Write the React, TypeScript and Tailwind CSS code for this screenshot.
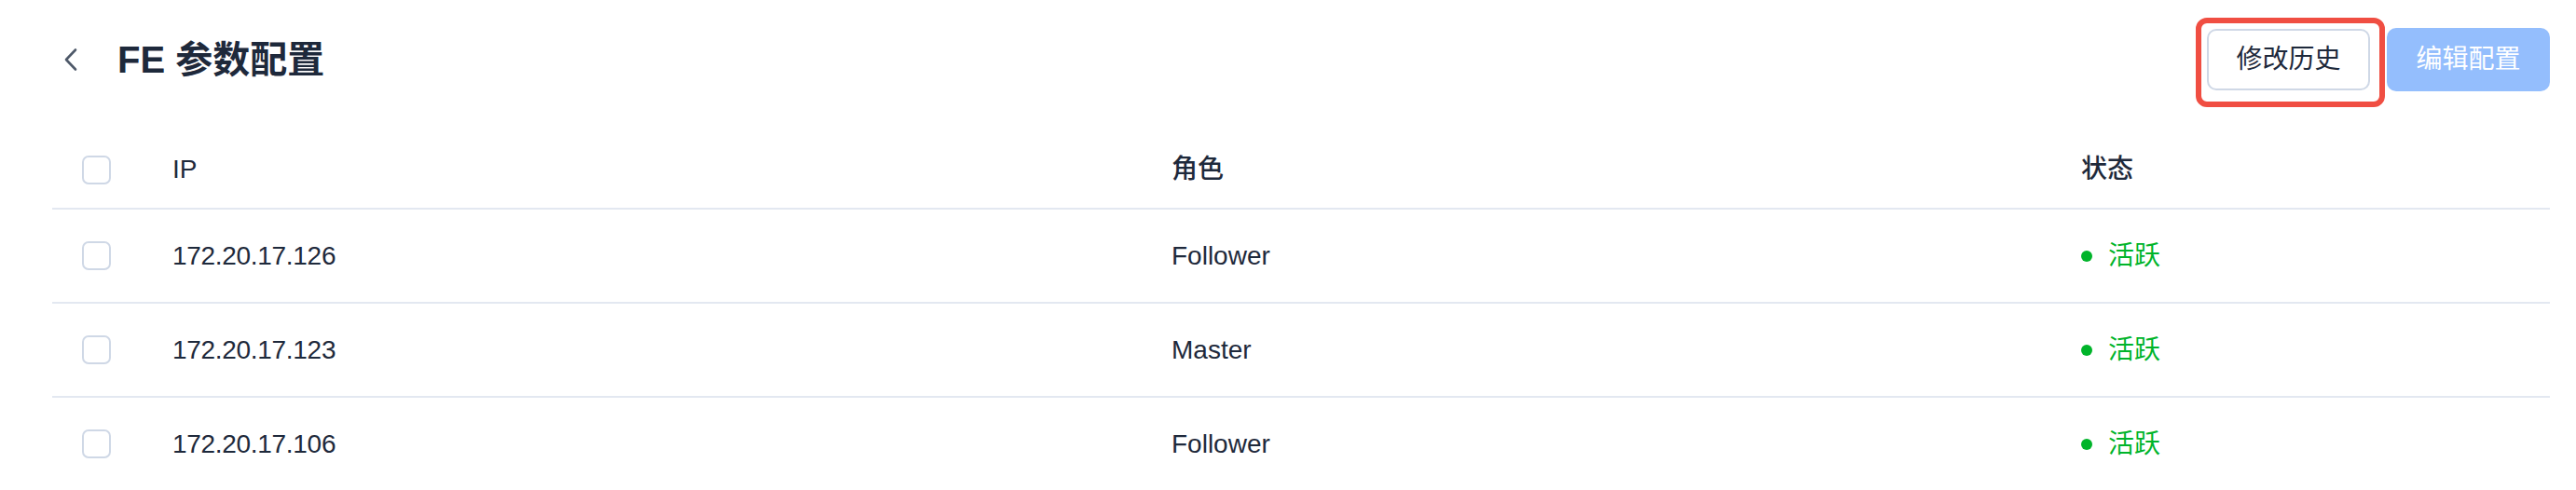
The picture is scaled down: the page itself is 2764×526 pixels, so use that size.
import React from "react";

const rows = [
  { ip: "172.20.17.126", role: "Follower" },
  { ip: "172.20.17.123", role: "Master" },
  { ip: "172.20.17.106", role: "Follower" },
];

function Checkbox() {
  return <div className="w-[31px] h-[31px] rounded-[7px] border-2 border-[#cfd8e6] bg-white" />;
}

export default function App() {
  return (
    <div
      className="w-[2764px] h-[526px] overflow-hidden bg-white pl-[56px] pr-[28px] text-[#1e293b]"
      style={{ fontFamily: '"Liberation Sans", "Noto Sans CJK SC", sans-serif' }}
    >
      <div className="h-[128px] flex items-center justify-between">
        <div className="flex items-center">
          <div className="w-[70px] flex items-center">
            <svg className="ml-[12px]" width="16" height="26" viewBox="0 0 16 26" fill="none">
              <path d="M13 2.5 L3 13 L13 23.5" stroke="#4e5969" strokeWidth="2.6" strokeLinecap="round" strokeLinejoin="round" />
            </svg>
          </div>
          <h1 className="text-[40px] font-semibold leading-none text-[#1e293b]">FE 参数配置</h1>
        </div>
        <div className="flex items-center gap-[18px]">
          <div className="relative">
            <button className="w-[175px] h-[66px] rounded-[10px] border-2 border-[#cfd8e6] bg-white text-[28px] text-[#1e293b] flex items-center justify-center">
              修改历史
            </button>
            <div className="absolute left-[-12px] top-[-12px] right-[-16px] bottom-[-18px] border-[6px] border-[#f04e42] rounded-[12px] pointer-events-none" />
          </div>
          <button className="w-[175px] h-[68px] rounded-[10px] bg-[#94befd] text-[28px] text-white flex items-center justify-center">
            编辑配置
          </button>
        </div>
      </div>

      <div className="mt-[12px]">
        <div className="grid grid-cols-[129px_1072px_976px_1fr] items-center h-[85px] border-b-2 border-[#e3e8f1] text-[28px] font-medium">
          <div className="pl-[32px] flex items-center pt-[2px]">
            <Checkbox />
          </div>
          <div>IP</div>
          <div>角色</div>
          <div>状态</div>
        </div>
        {rows.map((r) => (
          <div
            key={r.ip}
            className="grid grid-cols-[129px_1072px_976px_1fr] items-center h-[101px] border-b-2 border-[#e3e8f1] text-[28px]"
          >
            <div className="pl-[32px] flex items-center">
              <Checkbox />
            </div>
            <div className="tracking-[-0.3px]">{r.ip}</div>
            <div>{r.role}</div>
            <div className="flex items-center gap-[17px] text-[#00b42a]">
              <span className="w-[12px] h-[12px] rounded-full bg-[#00b42a]" />
              <span>活跃</span>
            </div>
          </div>
        ))}
      </div>
    </div>
  );
}
